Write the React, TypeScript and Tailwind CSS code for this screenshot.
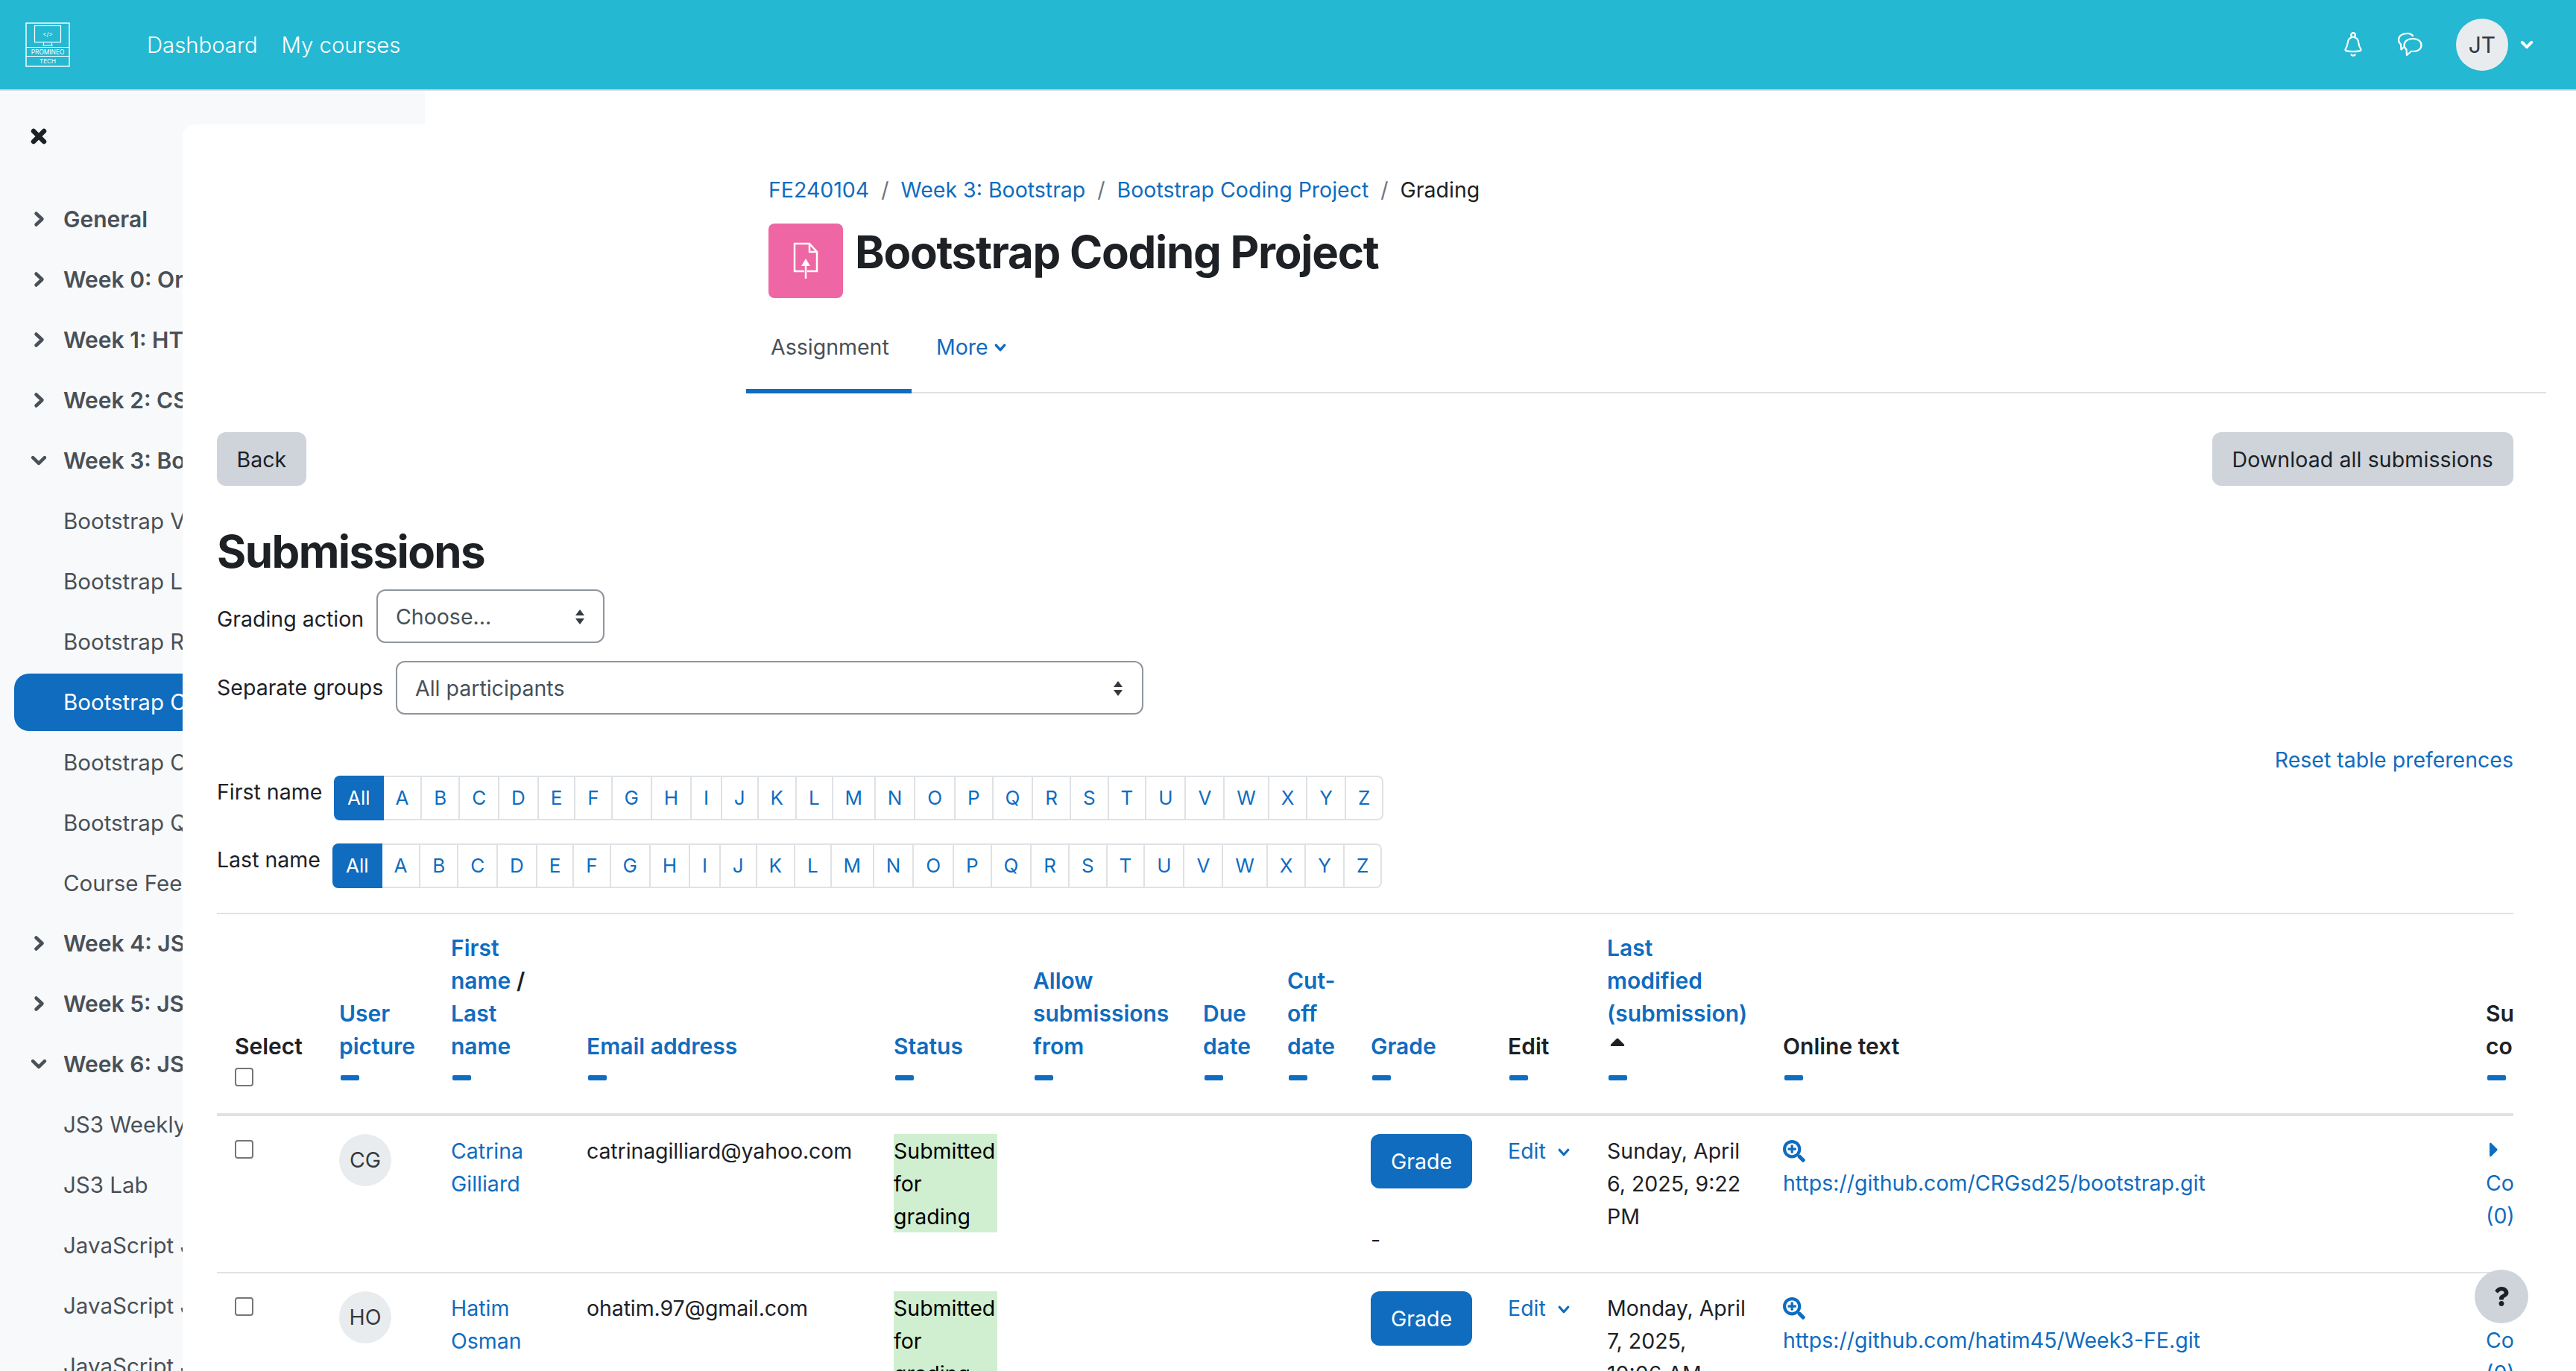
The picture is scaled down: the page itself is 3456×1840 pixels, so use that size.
import { FaSearchPlus, FaCaretRight, FaCaretUp, FaQuestion } from "react-icons/fa";

const BLUE = "text-[#0f6cbf]";

const sidebar: { t: string; k: "open" | "closed" | "item" | "active" }[] = [
  { t: "General", k: "closed" },
  { t: "Week 0: Orientation", k: "closed" },
  { t: "Week 1: HTML", k: "closed" },
  { t: "Week 2: CSS", k: "closed" },
  { t: "Week 3: Bootstrap", k: "open" },
  { t: "Bootstrap Video", k: "item" },
  { t: "Bootstrap Lab", k: "item" },
  { t: "Bootstrap Research", k: "item" },
  { t: "Bootstrap Coding Project", k: "active" },
  { t: "Bootstrap Code Review", k: "item" },
  { t: "Bootstrap Quiz", k: "item" },
  { t: "Course Feedback", k: "item" },
  { t: "Week 4: JS", k: "closed" },
  { t: "Week 5: JS", k: "closed" },
  { t: "Week 6: JS", k: "open" },
  { t: "JS3 Weekly", k: "item" },
  { t: "JS3 Lab", k: "item" },
  { t: "JavaScript Jive", k: "item" },
  { t: "JavaScript Jam", k: "item" },
  { t: "JavaScript Journey", k: "item" },
];

const letters = "ABCDEFGHIJKLMNOPQRSTUVWXYZ".split("");

function ChevRight({ className }: { className?: string }) {
  return (
    <svg width="15" height="22" viewBox="0 0 15 22" fill="none" stroke="currentColor" strokeWidth="4.5" strokeLinecap="round" strokeLinejoin="round" className={className}>
      <path d="M3.500 3.500L11.500 11l-8 7.500" />
    </svg>
  );
}

function ChevDown({ w = 22, h = 14, sw = 4.5, className }: { w?: number; h?: number; sw?: number; className?: string }) {
  const p = sw * 0.7;
  return (
    <svg width={w} height={h} viewBox={`0 0 ${w} ${h}`} fill="none" stroke="currentColor" strokeWidth={sw} strokeLinecap="round" strokeLinejoin="round" className={className}>
      <path d={`M${p} ${p}L${w / 2} ${h - p}L${w - p} ${p}`} />
    </svg>
  );
}

function Logo() {
  return (
    <svg width="60" height="60" viewBox="0 0 60 60" fill="none">
      <rect x="1" y="1" width="58" height="58" stroke="#fff" strokeWidth="1.4" />
      <rect x="12.5" y="4.500" width="35" height="22" stroke="#fff" strokeWidth="1.2" />
      <path d="M23 31h14M24.500 27.500V31M35.500 27.500V31" stroke="#fff" strokeWidth="1" />
      <text x="30" y="18.500" textAnchor="middle" fontSize="8" fill="#fff" fontFamily="Inter, sans-serif">{"</>"}</text>
      <path d="M1 33.500h58M1 45.500h58" stroke="#fff" strokeWidth="1.2" />
      <text x="30" y="42.500" textAnchor="middle" fontSize="8.400" fill="#fff" fontFamily="Inter, sans-serif">PROMINEO</text>
      <text x="30" y="54.500" textAnchor="middle" fontSize="8" fill="#fff" fontFamily="Inter, sans-serif">TECH</text>
    </svg>
  );
}

function Bell() {
  return (
    <svg width="26" height="34" viewBox="0 0 26 34" fill="none" stroke="#fff" strokeWidth="2.200" strokeLinejoin="round" strokeLinecap="round">
      <circle cx="13" cy="4" r="2.800" />
      <path d="M13 7c-5 0-7 3.500-7.400 8-.3 3.400-1 5-2.600 7.300-1 1.500-.6 2.700 1 3 5.500 1 12.500 1 18 0 1.600-.3 2-1.500 1-3-1.600-2.300-2.300-3.900-2.600-7.300C20 10.500 18 7 13 7z" />
      <path d="M10.500 30.500c1.200 1.600 3.800 1.600 5 0" />
    </svg>
  );
}

function Chat() {
  return (
    <svg width="34" height="34" viewBox="0 0 34 34" fill="none" stroke="#fff" strokeWidth="2.200" strokeLinejoin="round" strokeLinecap="round">
      <path d="M21 5c-1.600-2.200-4-3.200-6.500-3.200C7 1.800 2 5 2 10.500c0 2.500.8 4.300 3 6l.5 7 4.500-4" />
      <path d="M21 9c6.500 0 11.500 3 11.500 8.500S27.500 26 22 26c-1 0-2 0-3-.3L13 31l-.5-7.500C10.500 22 9.500 20 9.500 17.500 9.500 12 15 9 21 9z" />
    </svg>
  );
}

function Sort() {
  return (
    <svg width="14" height="22" viewBox="0 0 14 22" fill="#343a40">
      <path d="M7 1l6 8H1zM7 21L1 13h12z" />
    </svg>
  );
}

function Dash() {
  return <div className="mt-[17px] w-[25px] h-[7px] ml-[2px] bg-[#0f6cbf] rounded-[2px]" />;
}

function Initials({ label, w }: { label: string; w: string }) {
  return (
    <div className="flex items-start">
      <div className={`${w} text-[#1d2125] h-[44px] leading-[44px]`}>{label}</div>
      <div className="flex h-[60px] text-[26px] leading-[56px]">
        <div className="bg-[#0f6cbf] text-white px-[18px] rounded-l-[8px] leading-[60px]">All</div>
        {letters.map((l) => (
          <div key={l} className={`${BLUE} px-[15.950px] border-2 border-l-0 border-[#dee2e6] last:rounded-r-[8px]`}>{l}</div>
        ))}
      </div>
    </div>
  );
}

function Row(p: { i: string; first: string; last: string; email: string; date: string[]; url: string }) {
  return (
    <tr>
      <td className="h-[211px] border-b-2 border-[#dee2e6] px-[24px] pt-[24px] align-top">
        <div className="mt-[8px] w-[25px] h-[25px] border-2 border-[#767676] rounded-[4px] bg-white" />
      </td>
      <td className="border-b-2 border-[#dee2e6] px-[24px] pt-[24px] align-top">
        <div className="w-[70px] h-[70px] rounded-full bg-[#e9ecef] text-[#343a40] flex items-center justify-center">{p.i}</div>
      </td>
      <td className={`border-b-2 border-[#dee2e6] px-[24px] pt-[25px] align-top ${BLUE}`}>{p.first}<br />{p.last}</td>
      <td className="border-b-2 border-[#dee2e6] px-[24px] pt-[25px] align-top whitespace-nowrap tracking-[-0.1px]">{p.email}</td>
      <td className="border-b-2 border-[#dee2e6] px-[24px] pt-[24px] align-top">
        <div className="w-[139px] h-[132px] pt-[1px] bg-[#d0efd0] text-black">Submitted<br />for<br />grading</div>
      </td>
      <td className="border-b-2 border-[#dee2e6]" />
      <td className="border-b-2 border-[#dee2e6]" />
      <td className="border-b-2 border-[#dee2e6]" />
      <td className="border-b-2 border-[#dee2e6] pl-[24px] pt-[24px] align-top">
        <div className="w-[136px] h-[73px] bg-[#0f6cbf] text-white rounded-[12px] flex items-center justify-center">Grade</div>
        <div className="mt-[47px]">-</div>
      </td>
      <td className="border-b-2 border-[#dee2e6] px-[24px] pt-[25px] align-top">
        <div className={`flex items-center ${BLUE}`}>Edit<ChevDown w={16} h={11} sw={3.200} className="ml-[16px] mt-[2px]" /></div>
      </td>
      <td className="border-b-2 border-[#dee2e6] px-[24px] pt-[25px] align-top">
        {p.date.map((d) => <div key={d}>{d}</div>)}
      </td>
      <td className="border-b-2 border-[#dee2e6] px-[24px] pt-[25px] align-top">
        <FaSearchPlus className={`${BLUE} w-[30px] h-[30px] mt-[7px] mb-[6px]`} />
        <div className={`${BLUE} whitespace-nowrap`}>{p.url}</div>
      </td>
      <td className={`border-b-2 border-[#dee2e6] px-[24px] pt-[25px] align-top ${BLUE}`}>
        <FaCaretRight className="w-[26px] h-[32px] mt-[4px] mb-[7px] -ml-[2px]" />
        <div>Comments<br />(0)</div>
      </td>
    </tr>
  );
}

const H = ({ children }: { children: React.ReactNode }) => (
  <th className="px-[24px] pb-[44px] pt-[23px] align-bottom text-left font-semibold text-[30px] border-b-4 border-[#dee2e6]">{children}</th>
);
const L = ({ children }: { children: React.ReactNode }) => <span className={BLUE}>{children}</span>;

export default function App() {
  return (
    <div className="relative w-[3456px] h-[1840px] overflow-hidden bg-white text-[#1d2125] text-[28.5px] leading-[44px] font-['Inter',sans-serif]">
      <header className="h-[122px] bg-[#24b8d2] border-b-2 border-[#dee2e6] flex items-center pl-[34px] pr-[57px]">
        <Logo />
        <nav className="flex ml-[103px] gap-[32px] text-white font-light text-[29.3px] mt-[2px]">
          <span>Dashboard</span>
          <span>My courses</span>
        </nav>
        <div className="ml-auto flex items-center">
          <Bell />
          <div className="ml-[46px]"><Chat /></div>
          <div className="ml-[45px] w-[70px] h-[70px] rounded-full bg-[#e9ecef] text-[#343a40] flex items-center justify-center text-[30px]">JT</div>
          <ChevDown w={18} h={12} sw={4} className="ml-[16px] text-white" />
        </div>
      </header>

      <div className="flex h-[1718px]">
        <aside className="w-[570px] shrink-0 bg-[#f8f9fa] text-[#495057] text-[29.5px] pt-[50px]">
          <svg width="24" height="22" viewBox="0 0 24 22" fill="none" stroke="#1d2125" strokeWidth="6.500" strokeLinecap="round" className="ml-[40px]">
            <path d="M5 4l14 14M19 4L5 18" />
          </svg>
          <div className="mt-[61.500px] flex flex-col gap-[4px] pl-[19px]">
            {sidebar.map((s, i) => (
              <div
                key={i}
                className={`h-[77px] shrink-0 flex items-center whitespace-nowrap rounded-l-[20px] ${s.k === "active" ? "bg-[#0f6cbf] text-white" : ""} ${s.k === "open" || s.k === "closed" ? "font-semibold text-[30px]" : ""}`}
              >
                <div className="w-[66px] pl-[22px] shrink-0">
                  {s.k === "closed" && <ChevRight className="ml-[4px]" />}
                  {s.k === "open" && <ChevDown />}
                </div>
                {s.t}
              </div>
            ))}
          </div>
        </aside>

        <main className="relative -ml-[325px] mt-[45px] flex-1 min-w-0 bg-white rounded-tl-[16px] pt-[66px]">
          <div className="ml-[786px] flex items-center h-[44px] whitespace-nowrap">
            <span className={BLUE}>FE240104</span><span className="mx-[16px] text-[#6c757d]">/</span>
            <span className={BLUE}>Week 3: Bootstrap</span><span className="mx-[16px] text-[#6c757d]">/</span>
            <span className={BLUE}>Bootstrap Coding Project</span><span className="mx-[16px] text-[#6c757d]">/</span>
            <span>Grading</span>
          </div>
          <div className="ml-[786px] mt-[23px] flex">
            <div className="w-[100px] h-[100px] rounded-[8px] bg-[#ee66a3] flex items-center justify-center">
              <svg width="34" height="50" viewBox="0 0 34 50" fill="none" stroke="#fff" strokeWidth="2.500">
                <path d="M15 39H2V2h20l10 11v26H19" />
                <path d="M22 2v11h10" />
                <path d="M17 49V28" />
                <path d="M17 22l6 10H11z" fill="#fff" stroke="none" />
              </svg>
            </div>
            <h1 className="ml-[16px] text-[60px] leading-[76px] font-bold tracking-[-1.300px] whitespace-nowrap">Bootstrap Coding Project</h1>
          </div>

          <div className="ml-[756px] mr-[40px] mt-[10px] h-[118px] border-b-2 border-[#dee2e6] flex">
            <div className="w-[222px] h-[118px] border-b-[6px] border-[#0f6cbf] pl-[33px] pt-[34px] text-[#495057]">Assignment</div>
            <div className={`ml-[33px] pt-[34px] flex items-start ${BLUE}`}>
              <span>More</span><ChevDown w={16} h={11} sw={3.400} className="ml-[8px] mt-[17px]" />
            </div>
          </div>

          <div className="ml-[46px] mr-[84px]">
            <div className="mt-[52px] flex justify-between">
              <div className="h-[72px] px-[26.500px] pt-[2px] rounded-[12px] bg-[#ced4da] flex items-center">Back</div>
              <div className="h-[72px] px-[27px] pt-[2px] rounded-[12px] bg-[#ced4da] flex items-center tracking-[0.1px]">Download all submissions</div>
            </div>
            <h2 className="mt-[52px] h-[72px] text-[60px] leading-[72px] font-bold tracking-[-1.600px]">Submissions</h2>

            <div className="mt-[15px] flex items-center">
              <span className="w-[214px] mt-[8px]">Grading action</span>
              <div className="w-[306px] h-[72px] border-2 border-[#8f959e] rounded-[12px] pl-[24px] pr-[24px] pt-[2px] flex items-center justify-between text-[#495057]">
                <span>Choose...</span><Sort />
              </div>
            </div>
            <div className="mt-[24px] flex items-center">
              <span className="w-[240px]">Separate groups</span>
              <div className="w-[1003px] h-[72px] border-2 border-[#8f959e] rounded-[12px] pl-[24px] pr-[25px] pt-[2px] flex items-center justify-between text-[#495057]">
                <span>All participants</span><Sort />
              </div>
            </div>

            <div className={`mt-[39px] h-[44px] flex justify-end ${BLUE}`}>Reset table preferences</div>
            <div className="-mt-[1px]"><Initials label="First name" w="w-[157px]" /></div>
            <div className="mt-[31px]"><Initials label="Last name" w="w-[155px]" /></div>

            <div className="mt-[33px] border-t-2 border-[#dee2e6] overflow-hidden">
              <table className="table-fixed border-separate border-spacing-0 w-[3220px]">
                <colgroup>
                  <col className="w-[140px]" /><col className="w-[150px]" /><col className="w-[182px]" /><col className="w-[412px]" />
                  <col className="w-[187px]" /><col className="w-[228px]" /><col className="w-[113px]" /><col className="w-[112px]" />
                  <col className="w-[184px]" /><col className="w-[133px]" /><col className="w-[236px]" /><col className="w-[943px]" />
                  <col className="w-[200px]" />
                </colgroup>
                <thead>
                  <tr>
                    <th className="px-[24px] pb-[36px] pt-[23px] align-bottom text-left font-semibold text-[30px] border-b-4 border-[#dee2e6]">
                      Select
                      <div className="mt-[7px] w-[25px] h-[25px] border-2 border-[#767676] rounded-[4px] bg-white" />
                    </th>
                    <H><L>User picture</L><Dash /></H>
                    <H><L>First name</L> / <L>Last name</L><Dash /></H>
                    <H><L>Email address</L><Dash /></H>
                    <H><L>Status</L><Dash /></H>
                    <H><L>Allow submissions from</L><Dash /></H>
                    <H><L>Due date</L><Dash /></H>
                    <H><L>Cut-off date</L><Dash /></H>
                    <H><L>Grade</L><Dash /></H>
                    <H>Edit<Dash /></H>
                    <H>
                      <L>Last<br />modified<br />(submission)</L>
                      <div className="h-[44px]"><FaCaretUp className="-ml-[2px] w-[32px] h-[32px]" /></div>
                      <Dash />
                    </H>
                    <H>Online text<Dash /></H>
                    <H>Submission comments<Dash /></H>
                  </tr>
                </thead>
                <tbody>
                  <Row i="CG" first="Catrina" last="Gilliard" email="catrinagilliard@yahoo.com" date={["Sunday, April", "6, 2025, 9:22", "PM"]} url="https://github.com/CRGsd25/bootstrap.git" />
                  <Row i="HO" first="Hatim" last="Osman" email="ohatim.97@gmail.com" date={["Monday, April", "7, 2025,", "10:06 AM"]} url="https://github.com/hatim45/Week3-FE.git" />
                </tbody>
              </table>
            </div>
          </div>
        </main>
      </div>

      <div className="absolute left-[3320px] top-[1704px] w-[72px] h-[72px] rounded-full bg-[#ced4da] flex items-center justify-center">
        <FaQuestion className="w-[22px] h-[26px] text-[#1d2125]" />
      </div>
    </div>
  );
}
